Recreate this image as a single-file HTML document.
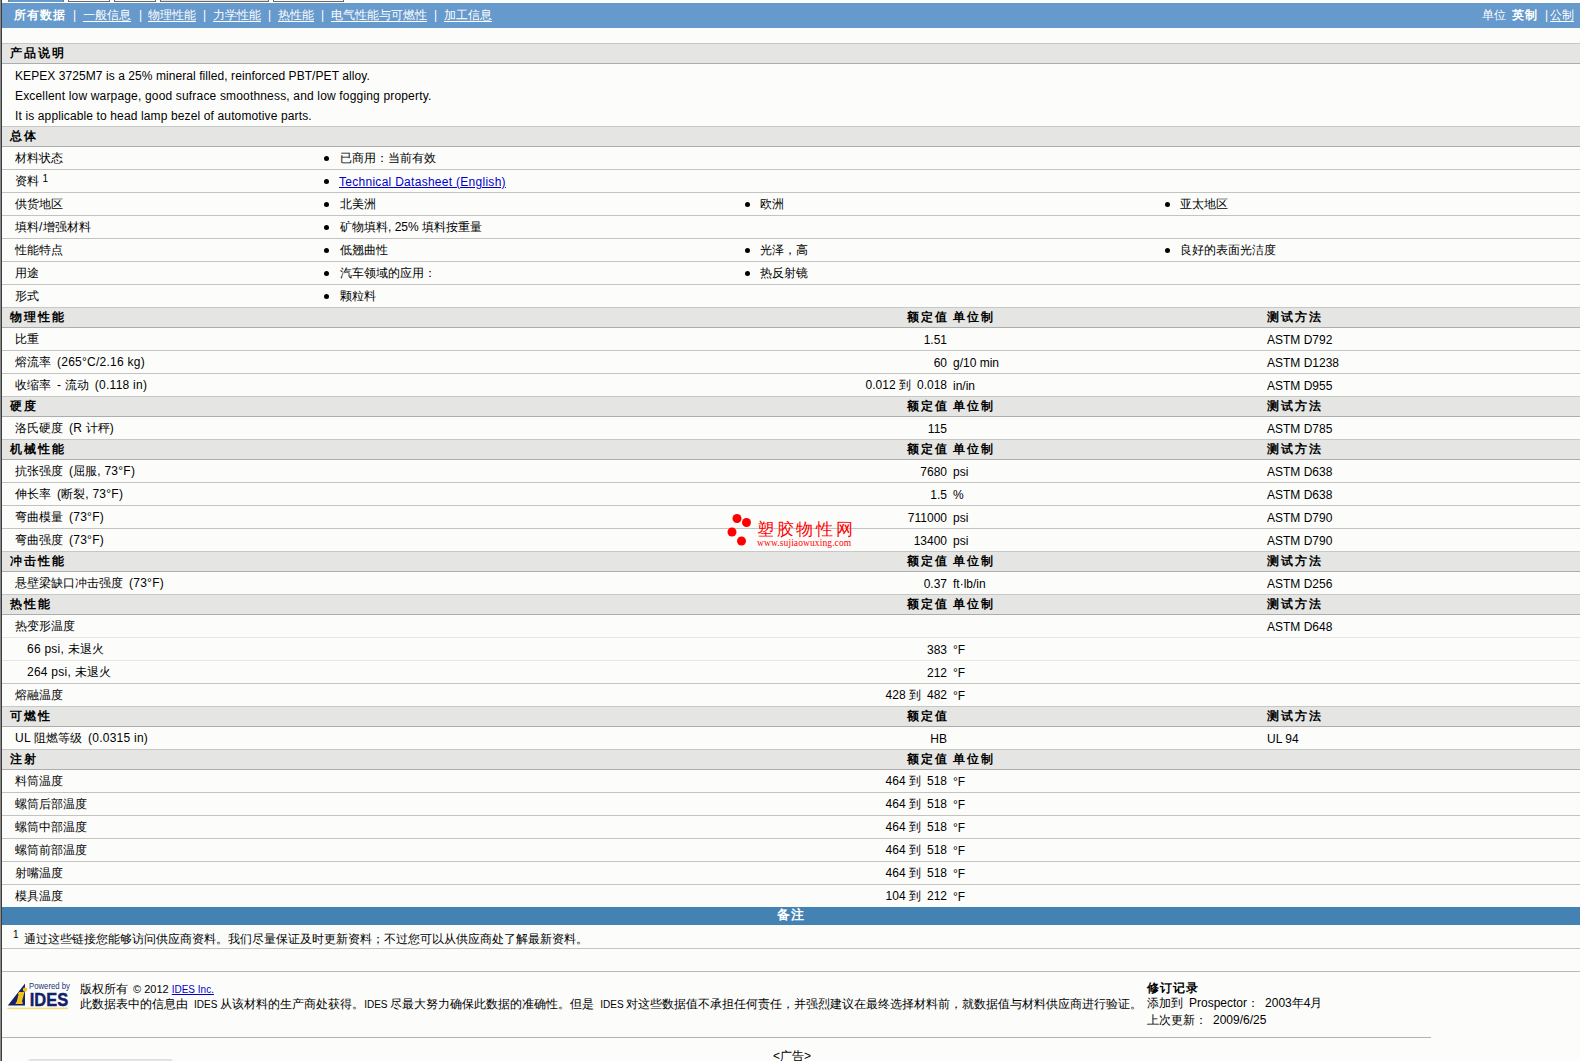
<!DOCTYPE html>
<html><head><meta charset="utf-8"><title>KEPEX 3725M7</title>
<style>
html,body{margin:0;padding:0}
body{width:1580px;height:1061px;overflow:hidden;position:relative;background:#fcfdfb;font-family:"Liberation Sans",sans-serif;font-size:12px;color:#000}
.t{position:absolute;white-space:nowrap;line-height:22px;height:22px}
.r{text-align:right}
.i10{font-size:10px}
.lbl{letter-spacing:0.25px}
.lbl .c{letter-spacing:0}
.sp{display:inline-block;width:6px}
@font-face{font-family:"CJKBox";src:local("Liberation Sans"),local("LiberationSans");font-weight:normal;size-adjust:133.333%;unicode-range:U+0020,U+3000-303F,U+3400-9FFF,U+FF00-FFEF}
@font-face{font-family:"CJKBox";src:local("Liberation Sans Bold"),local("LiberationSans-Bold");font-weight:bold;size-adjust:133.333%;unicode-range:U+0020,U+3000-303F,U+3400-9FFF,U+FF00-FFEF}
.c{display:inline-block;white-space:nowrap;overflow:visible;line-height:0;font-family:"CJKBox","Liberation Sans",sans-serif}
.u .c{display:inline;line-height:0}
.b{font-weight:bold}
.hb{font-weight:bold;letter-spacing:2px}
.nb{font-weight:bold;letter-spacing:1px}
.hl{position:absolute;height:1px}
.hd{position:absolute;left:2px;width:1578px;height:19px;background:#e5e6e3;border-top:1px solid #c6c8c5;border-bottom:1px solid #adadad}
.bu{position:absolute;width:5px;height:5px;border-radius:50%;background:#000}
.nav{position:absolute;left:2px;top:3px;width:1578px;height:25px;background:#6699cc}
.w{color:#fff}
.u{text-decoration:underline;text-underline-offset:2px}
a{color:#0000cc;letter-spacing:0.28px}
a.u{text-underline-offset:1px}
sup{font-size:10px;vertical-align:top;position:relative;top:-2px}
</style></head><body>

<div style="position:absolute;left:0;top:0;width:1px;height:1061px;background:#8a8a8a"></div>
<div style="position:absolute;left:1px;top:0;width:1px;height:1061px;background:#3c3c3c"></div>
<div style="position:absolute;left:8px;top:0;width:54px;height:2px;background:#6699cc;border-left:1px solid #7a7060;border-right:1px solid #7a7060"></div>
<div style="position:absolute;left:68px;top:0;width:40px;height:1px;background:#fafaf8;border:1px solid #6a6a6a;border-top:none"></div>
<div style="position:absolute;left:114px;top:0;width:40px;height:1px;background:#fafaf8;border:1px solid #6a6a6a;border-top:none"></div>
<div style="position:absolute;left:160px;top:0;width:107px;height:1px;background:#e4e4e2;border:1px solid #6a6a6a;border-top:none"></div>
<div style="position:absolute;left:273px;top:0;width:69px;height:1px;background:#fafaf8;border:1px solid #6a6a6a;border-top:none"></div>
<div class="nav"></div>
<div class="t nb w" style="left:14px;top:3px;line-height:25px;height:25px"><span class="c" style="width:52px">所有数据</span></div>
<div class="t w" style="left:73px;top:3px;line-height:25px;height:25px">|</div>
<div class="t w" style="left:139px;top:3px;line-height:25px;height:25px">|</div>
<div class="t w" style="left:203px;top:3px;line-height:25px;height:25px">|</div>
<div class="t w" style="left:268px;top:3px;line-height:25px;height:25px">|</div>
<div class="t w" style="left:321px;top:3px;line-height:25px;height:25px">|</div>
<div class="t w" style="left:434px;top:3px;line-height:25px;height:25px">|</div>
<div class="t w u" style="left:83px;top:3px;line-height:25px;height:25px"><span class="c" style="width:48px">一般信息</span></div>
<div class="t w u" style="left:148px;top:3px;line-height:25px;height:25px"><span class="c" style="width:48px">物理性能</span></div>
<div class="t w u" style="left:213px;top:3px;line-height:25px;height:25px"><span class="c" style="width:48px">力学性能</span></div>
<div class="t w u" style="left:278px;top:3px;line-height:25px;height:25px"><span class="c" style="width:36px">热性能</span></div>
<div class="t w u" style="left:331px;top:3px;line-height:25px;height:25px"><span class="c" style="width:96px">电气性能与可燃性</span></div>
<div class="t w u" style="left:444px;top:3px;line-height:25px;height:25px"><span class="c" style="width:48px">加工信息</span></div>
<div class="t w" style="left:1482px;top:3px;line-height:25px;height:25px"><span class="c" style="width:24px">单位</span></div>
<div class="t w nb" style="left:1512px;top:3px;line-height:25px;height:25px"><span class="c" style="width:26px">英制</span></div>
<div class="t w" style="left:1545px;top:3px;line-height:25px;height:25px">|</div>
<div class="t w u" style="left:1550px;top:3px;line-height:25px;height:25px"><span class="c" style="width:24px">公制</span></div>
<div class="hd" style="top:43px"></div>
<div class="t hb" style="left:10px;top:42px;"><span class="c" style="width:56px">产品说明</span></div>
<div class="t " style="left:15px;top:66px;line-height:20px;height:20px;letter-spacing:0.07px">KEPEX 3725M7 is a 25% mineral filled, reinforced PBT/PET alloy.</div>
<div class="t " style="left:15px;top:86px;line-height:20px;height:20px;letter-spacing:0.17px">Excellent low warpage, good sufrace smoothness, and low fogging property.</div>
<div class="t " style="left:15px;top:106px;line-height:20px;height:20px;letter-spacing:0.13px">It is applicable to head lamp bezel of automotive parts.</div>
<div class="hd" style="top:126px"></div>
<div class="t hb" style="left:10px;top:125px;"><span class="c" style="width:28px">总体</span></div>
<div class="t lbl" style="left:15px;top:147px;"><span class="c" style="width:48px">材料状态</span></div>
<div class="hl" style="top:169px;left:2px;width:1578px;background:#c3c4c2"></div>
<div class="bu" style="left:324px;top:156px"></div>
<div class="t " style="left:340px;top:147px;"><span class="c" style="width:96px">已商用：当前有效</span></div>
<div class="t lbl" style="left:15px;top:170px;"><span class="c" style="width:24px">资料</span> <sup>1</sup></div>
<div class="hl" style="top:192px;left:2px;width:1578px;background:#c3c4c2"></div>
<div class="bu" style="left:324px;top:179px"></div>
<div class="t " style="left:339px;top:171px;"><a href="#" class="u">Technical Datasheet (English)</a></div>
<div class="t lbl" style="left:15px;top:193px;"><span class="c" style="width:48px">供货地区</span></div>
<div class="hl" style="top:215px;left:2px;width:1578px;background:#c3c4c2"></div>
<div class="bu" style="left:324px;top:202px"></div>
<div class="t " style="left:340px;top:193px;"><span class="c" style="width:36px">北美洲</span></div>
<div class="bu" style="left:745px;top:202px"></div>
<div class="t " style="left:760px;top:193px;"><span class="c" style="width:24px">欧洲</span></div>
<div class="bu" style="left:1165px;top:202px"></div>
<div class="t " style="left:1180px;top:193px;"><span class="c" style="width:48px">亚太地区</span></div>
<div class="t lbl" style="left:15px;top:216px;"><span class="c" style="width:24px">填料</span>/<span class="c" style="width:48px">增强材料</span></div>
<div class="hl" style="top:238px;left:2px;width:1578px;background:#c3c4c2"></div>
<div class="bu" style="left:324px;top:225px"></div>
<div class="t " style="left:340px;top:216px;"><span class="c" style="width:48px">矿物填料</span>, 25% <span class="c" style="width:60px">填料按重量</span></div>
<div class="t lbl" style="left:15px;top:239px;"><span class="c" style="width:48px">性能特点</span></div>
<div class="hl" style="top:261px;left:2px;width:1578px;background:#c3c4c2"></div>
<div class="bu" style="left:324px;top:248px"></div>
<div class="t " style="left:340px;top:239px;"><span class="c" style="width:48px">低翘曲性</span></div>
<div class="bu" style="left:745px;top:248px"></div>
<div class="t " style="left:760px;top:239px;"><span class="c" style="width:48px">光泽，高</span></div>
<div class="bu" style="left:1165px;top:248px"></div>
<div class="t " style="left:1180px;top:239px;"><span class="c" style="width:96px">良好的表面光洁度</span></div>
<div class="t lbl" style="left:15px;top:262px;"><span class="c" style="width:24px">用途</span></div>
<div class="hl" style="top:284px;left:2px;width:1578px;background:#c3c4c2"></div>
<div class="bu" style="left:324px;top:271px"></div>
<div class="t " style="left:340px;top:262px;"><span class="c" style="width:96px">汽车领域的应用：</span></div>
<div class="bu" style="left:745px;top:271px"></div>
<div class="t " style="left:760px;top:262px;"><span class="c" style="width:48px">热反射镜</span></div>
<div class="t lbl" style="left:15px;top:285px;"><span class="c" style="width:24px">形式</span></div>
<div class="hl" style="top:307px;left:2px;width:1578px;background:#c3c4c2"></div>
<div class="bu" style="left:324px;top:294px"></div>
<div class="t " style="left:340px;top:285px;"><span class="c" style="width:36px">颗粒料</span></div>
<div class="hd" style="top:307px"></div>
<div class="t hb" style="left:10px;top:306px;"><span class="c" style="width:56px">物理性能</span></div>
<div class="t r hb" style="right:631px;top:306px;"><span class="c" style="width:42px">额定值</span></div>
<div class="t hb" style="left:953px;top:306px;"><span class="c" style="width:42px">单位制</span></div>
<div class="t hb" style="left:1267px;top:306px;"><span class="c" style="width:56px">测试方法</span></div>
<div class="t lbl" style="left:15px;top:328px;"><span class="c" style="width:24px">比重</span></div>
<div class="t r " style="right:633px;top:329px;">1.51</div>
<div class="t " style="left:1267px;top:329px;">ASTM D792</div>
<div class="hl" style="top:350px;left:2px;width:1578px;background:#c3c4c2"></div>
<div class="t lbl" style="left:15px;top:351px;"><span class="c" style="width:36px">熔流率</span><span class="sp"></span>(265°C/2.16 kg)</div>
<div class="t r " style="right:633px;top:352px;">60</div>
<div class="t " style="left:953px;top:352px;">g/10 min</div>
<div class="t " style="left:1267px;top:352px;">ASTM D1238</div>
<div class="hl" style="top:373px;left:2px;width:1578px;background:#c3c4c2"></div>
<div class="t lbl" style="left:15px;top:374px;"><span class="c" style="width:36px">收缩率</span><span class="sp"></span>- <span class="c" style="width:24px">流动</span><span class="sp"></span>(0.118 in)</div>
<div class="t r " style="right:633px;top:374px;">0.012 <span class="c" style="width:12px">到</span><span class="sp"></span>0.018</div>
<div class="t " style="left:953px;top:375px;">in/in</div>
<div class="t " style="left:1267px;top:375px;">ASTM D955</div>
<div class="hl" style="top:396px;left:2px;width:1578px;background:#c3c4c2"></div>
<div class="hd" style="top:396px"></div>
<div class="t hb" style="left:10px;top:395px;"><span class="c" style="width:28px">硬度</span></div>
<div class="t r hb" style="right:631px;top:395px;"><span class="c" style="width:42px">额定值</span></div>
<div class="t hb" style="left:953px;top:395px;"><span class="c" style="width:42px">单位制</span></div>
<div class="t hb" style="left:1267px;top:395px;"><span class="c" style="width:56px">测试方法</span></div>
<div class="t lbl" style="left:15px;top:417px;"><span class="c" style="width:48px">洛氏硬度</span><span class="sp"></span>(R <span class="c" style="width:24px">计秤</span>)</div>
<div class="t r " style="right:633px;top:418px;">115</div>
<div class="t " style="left:1267px;top:418px;">ASTM D785</div>
<div class="hl" style="top:439px;left:2px;width:1578px;background:#c3c4c2"></div>
<div class="hd" style="top:439px"></div>
<div class="t hb" style="left:10px;top:438px;"><span class="c" style="width:56px">机械性能</span></div>
<div class="t r hb" style="right:631px;top:438px;"><span class="c" style="width:42px">额定值</span></div>
<div class="t hb" style="left:953px;top:438px;"><span class="c" style="width:42px">单位制</span></div>
<div class="t hb" style="left:1267px;top:438px;"><span class="c" style="width:56px">测试方法</span></div>
<div class="t lbl" style="left:15px;top:460px;"><span class="c" style="width:48px">抗张强度</span><span class="sp"></span>(<span class="c" style="width:24px">屈服</span>, 73°F)</div>
<div class="t r " style="right:633px;top:461px;">7680</div>
<div class="t " style="left:953px;top:461px;">psi</div>
<div class="t " style="left:1267px;top:461px;">ASTM D638</div>
<div class="hl" style="top:482px;left:2px;width:1578px;background:#c3c4c2"></div>
<div class="t lbl" style="left:15px;top:483px;"><span class="c" style="width:36px">伸长率</span><span class="sp"></span>(<span class="c" style="width:24px">断裂</span>, 73°F)</div>
<div class="t r " style="right:633px;top:484px;">1.5</div>
<div class="t " style="left:953px;top:484px;">%</div>
<div class="t " style="left:1267px;top:484px;">ASTM D638</div>
<div class="hl" style="top:505px;left:2px;width:1578px;background:#c3c4c2"></div>
<div class="t lbl" style="left:15px;top:506px;"><span class="c" style="width:48px">弯曲模量</span><span class="sp"></span>(73°F)</div>
<div class="t r " style="right:633px;top:507px;">711000</div>
<div class="t " style="left:953px;top:507px;">psi</div>
<div class="t " style="left:1267px;top:507px;">ASTM D790</div>
<div class="hl" style="top:528px;left:2px;width:1578px;background:#c3c4c2"></div>
<div class="t lbl" style="left:15px;top:529px;"><span class="c" style="width:48px">弯曲强度</span><span class="sp"></span>(73°F)</div>
<div class="t r " style="right:633px;top:530px;">13400</div>
<div class="t " style="left:953px;top:530px;">psi</div>
<div class="t " style="left:1267px;top:530px;">ASTM D790</div>
<div class="hl" style="top:551px;left:2px;width:1578px;background:#c3c4c2"></div>
<div class="hd" style="top:551px"></div>
<div class="t hb" style="left:10px;top:550px;"><span class="c" style="width:56px">冲击性能</span></div>
<div class="t r hb" style="right:631px;top:550px;"><span class="c" style="width:42px">额定值</span></div>
<div class="t hb" style="left:953px;top:550px;"><span class="c" style="width:42px">单位制</span></div>
<div class="t hb" style="left:1267px;top:550px;"><span class="c" style="width:56px">测试方法</span></div>
<div class="t lbl" style="left:15px;top:572px;"><span class="c" style="width:108px">悬壁梁缺口冲击强度</span><span class="sp"></span>(73°F)</div>
<div class="t r " style="right:633px;top:573px;">0.37</div>
<div class="t " style="left:953px;top:573px;">ft·lb/in</div>
<div class="t " style="left:1267px;top:573px;">ASTM D256</div>
<div class="hl" style="top:594px;left:2px;width:1578px;background:#c3c4c2"></div>
<div class="hd" style="top:594px"></div>
<div class="t hb" style="left:10px;top:593px;"><span class="c" style="width:42px">热性能</span></div>
<div class="t r hb" style="right:631px;top:593px;"><span class="c" style="width:42px">额定值</span></div>
<div class="t hb" style="left:953px;top:593px;"><span class="c" style="width:42px">单位制</span></div>
<div class="t hb" style="left:1267px;top:593px;"><span class="c" style="width:56px">测试方法</span></div>
<div class="t lbl" style="left:15px;top:615px;"><span class="c" style="width:60px">热变形温度</span></div>
<div class="t " style="left:1267px;top:616px;">ASTM D648</div>
<div class="hl" style="top:637px;left:2px;width:1578px;background:#e6e7e5"></div>
<div class="t lbl" style="left:27px;top:638px;">66 psi, <span class="c" style="width:36px">未退火</span></div>
<div class="t r " style="right:633px;top:639px;">383</div>
<div class="t " style="left:953px;top:639px;">°F</div>
<div class="hl" style="top:660px;left:2px;width:1578px;background:#e6e7e5"></div>
<div class="t lbl" style="left:27px;top:661px;">264 psi, <span class="c" style="width:36px">未退火</span></div>
<div class="t r " style="right:633px;top:662px;">212</div>
<div class="t " style="left:953px;top:662px;">°F</div>
<div class="hl" style="top:683px;left:2px;width:1578px;background:#c3c4c2"></div>
<div class="t lbl" style="left:15px;top:684px;"><span class="c" style="width:48px">熔融温度</span></div>
<div class="t r " style="right:633px;top:684px;">428 <span class="c" style="width:12px">到</span><span class="sp"></span>482</div>
<div class="t " style="left:953px;top:685px;">°F</div>
<div class="hl" style="top:706px;left:2px;width:1578px;background:#c3c4c2"></div>
<div class="hd" style="top:706px"></div>
<div class="t hb" style="left:10px;top:705px;"><span class="c" style="width:42px">可燃性</span></div>
<div class="t r hb" style="right:631px;top:705px;"><span class="c" style="width:42px">额定值</span></div>
<div class="t hb" style="left:1267px;top:705px;"><span class="c" style="width:56px">测试方法</span></div>
<div class="t lbl" style="left:15px;top:727px;">UL <span class="c" style="width:48px">阻燃等级</span><span class="sp"></span>(0.0315 in)</div>
<div class="t r " style="right:633px;top:728px;">HB</div>
<div class="t " style="left:1267px;top:728px;">UL 94</div>
<div class="hl" style="top:749px;left:2px;width:1578px;background:#c3c4c2"></div>
<div class="hd" style="top:749px"></div>
<div class="t hb" style="left:10px;top:748px;"><span class="c" style="width:28px">注射</span></div>
<div class="t r hb" style="right:631px;top:748px;"><span class="c" style="width:42px">额定值</span></div>
<div class="t hb" style="left:953px;top:748px;"><span class="c" style="width:42px">单位制</span></div>
<div class="t lbl" style="left:15px;top:770px;"><span class="c" style="width:48px">料筒温度</span></div>
<div class="t r " style="right:633px;top:770px;">464 <span class="c" style="width:12px">到</span><span class="sp"></span>518</div>
<div class="t " style="left:953px;top:771px;">°F</div>
<div class="hl" style="top:792px;left:2px;width:1578px;background:#c3c4c2"></div>
<div class="t lbl" style="left:15px;top:793px;"><span class="c" style="width:72px">螺筒后部温度</span></div>
<div class="t r " style="right:633px;top:793px;">464 <span class="c" style="width:12px">到</span><span class="sp"></span>518</div>
<div class="t " style="left:953px;top:794px;">°F</div>
<div class="hl" style="top:815px;left:2px;width:1578px;background:#c3c4c2"></div>
<div class="t lbl" style="left:15px;top:816px;"><span class="c" style="width:72px">螺筒中部温度</span></div>
<div class="t r " style="right:633px;top:816px;">464 <span class="c" style="width:12px">到</span><span class="sp"></span>518</div>
<div class="t " style="left:953px;top:817px;">°F</div>
<div class="hl" style="top:838px;left:2px;width:1578px;background:#c3c4c2"></div>
<div class="t lbl" style="left:15px;top:839px;"><span class="c" style="width:72px">螺筒前部温度</span></div>
<div class="t r " style="right:633px;top:839px;">464 <span class="c" style="width:12px">到</span><span class="sp"></span>518</div>
<div class="t " style="left:953px;top:840px;">°F</div>
<div class="hl" style="top:861px;left:2px;width:1578px;background:#c3c4c2"></div>
<div class="t lbl" style="left:15px;top:862px;"><span class="c" style="width:48px">射嘴温度</span></div>
<div class="t r " style="right:633px;top:862px;">464 <span class="c" style="width:12px">到</span><span class="sp"></span>518</div>
<div class="t " style="left:953px;top:863px;">°F</div>
<div class="hl" style="top:884px;left:2px;width:1578px;background:#c3c4c2"></div>
<div class="t lbl" style="left:15px;top:885px;"><span class="c" style="width:48px">模具温度</span></div>
<div class="t r " style="right:633px;top:885px;">104 <span class="c" style="width:12px">到</span><span class="sp"></span>212</div>
<div class="t " style="left:953px;top:886px;">°F</div>
<div style="position:absolute;left:2px;top:907px;width:1578px;height:18px;background:#4482b4"></div>
<div class="t w" style="left:2px;width:1578px;top:906px;height:18px;line-height:18px;text-align:center;font-weight:bold;font-size:13px;letter-spacing:1.5px"><span class="c" style="width:30px">备注</span></div>
<div class="t" style="left:13px;top:929px;font-size:10px;line-height:12px;height:12px">1</div>
<div class="t " style="left:24px;top:929px;line-height:21px;height:21px"><span class="c" style="width:564px">通过这些链接您能够访问供应商资料。我们尽量保证及时更新资料；不过您可以从供应商处了解最新资料。</span></div>
<div class="hl" style="top:948px;left:2px;width:1578px;background:#c3c4c2"></div>
<div class="hl" style="top:971px;left:2px;width:1578px;background:#b8b8b8"></div>
<svg style="position:absolute;left:0;top:975px" width="80" height="40" viewBox="0 0 80 40">
<polygon points="7.8,30.6 25,8.4 25,30.6" fill="#13206a"/>
<polygon points="19,17 24.5,17 21.8,27.2 23,27.2 22.5,29 15.5,29 16,27.2 16.6,27.2 18.6,19 17.6,19" fill="#f3c21a"/>
<circle cx="25" cy="14.6" r="2.2" fill="#f3c21a"/>
<text x="29" y="14" font-family="Liberation Sans" font-size="8.4" fill="#24337a" textLength="41" lengthAdjust="spacingAndGlyphs">Powered by</text>
<text x="29.8" y="31" font-family="Liberation Sans" font-weight="bold" font-size="19" fill="#13206a" stroke="#13206a" stroke-width="0.45" textLength="38.4" lengthAdjust="spacingAndGlyphs">IDES</text>
<rect x="7.3" y="32.6" width="60.5" height="1.6" fill="#f8da7a"/>
</svg>
<div class="t " style="left:80px;top:979px;line-height:21px;height:21px"><span class="c" style="width:48px">版权所有</span><span style="font-size:11px;padding-left:5px">© 2012 </span><a href="#" class="u" style="font-size:10px;letter-spacing:0">IDES Inc.</a></div>
<div class="t " style="left:80px;top:994px;line-height:21px;height:21px"><span class="c" style="width:108px">此数据表中的信息由</span><span class="i10" style="padding-left:6px">IDES </span><span class="c" style="width:144px">从该材料的生产商处获得。</span><span class="i10">IDES </span><span class="c" style="width:204px">尽最大努力确保此数据的准确性。但是</span><span class="i10" style="padding-left:6px">IDES </span><span class="c" style="width:516px">对这些数据值不承担任何责任，并强烈建议在最终选择材料前，就数据值与材料供应商进行验证。</span></div>
<div class="t nb" style="left:1147px;top:978px;line-height:21px;height:21px"><span class="c" style="width:52px">修订记录</span></div>
<div class="t " style="left:1147px;top:993px;line-height:21px;height:21px"><span class="c" style="width:36px">添加到</span><span class="sp"></span>Prospector<span class="c" style="width:12px">：</span><span class="sp"></span>2003<span class="c" style="width:12px">年</span>4<span class="c" style="width:12px">月</span></div>
<div class="t " style="left:1147px;top:1010px;line-height:21px;height:21px"><span class="c" style="width:60px">上次更新：</span><span class="sp"></span>2009/6/25</div>
<div class="hl" style="top:1037px;left:2px;width:1429px;background:#b4b4b4"></div>
<div style="position:absolute;left:28px;top:1059px;width:145px;height:6px;background:#e6e6e6;border-radius:3px;border-top:1px solid #dedede"></div>
<div class="t " style="left:773px;top:1046px;line-height:21px;height:21px;font-size:12px">&lt;<span class="c" style="width:24px">广告</span>&gt;</div>
<svg style="position:absolute;left:724px;top:510px" width="132" height="42" viewBox="0 0 132 42">
<circle cx="13" cy="8.5" r="4.5" fill="#f00"/>
<circle cx="22.5" cy="12.5" r="4.5" fill="#f00"/>
<circle cx="8" cy="22" r="4.5" fill="#f00"/>
<circle cx="17.5" cy="31" r="4.5" fill="#f00"/>
</svg>
<div class="t" style="left:757px;top:519px;font-size:17.2px;line-height:20px;height:20px;color:#f00;letter-spacing:2.7px"><span class="c" style="width:100px">塑胶物性网</span></div>
<div class="t" style="left:757px;top:537px;font-family:'Liberation Serif',serif;font-size:9.5px;line-height:12px;height:12px;color:#f00;letter-spacing:0.1px">www.sujiaowuxing.com</div>
</body></html>
